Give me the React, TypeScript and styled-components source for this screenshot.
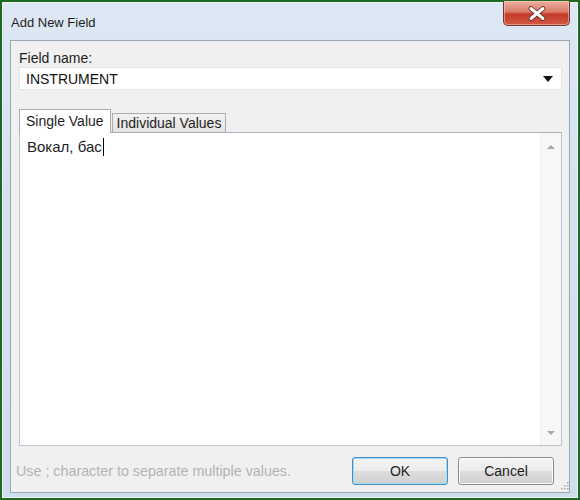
import React from "react";
import styled, { createGlobalStyle } from "styled-components";

const GlobalStyle = createGlobalStyle`
  html, body { margin: 0; padding: 0; background: #ffffff; }
  body { font-family: "Liberation Sans", Arial, sans-serif; }
  * { box-sizing: border-box; }
`;

const Window = styled.div`
  width: 580px;
  height: 500px;
  border: 2px solid #1f6a22;
  background: linear-gradient(180deg, #dde8f4 0%, #d4e2f0 40%, #cfdeed 100%);
  display: flex;
  flex-direction: column;
  box-shadow: inset 0 0 0 1px #eef4fa;
`;

const TitleBar = styled.div`
  height: 38px;
  display: flex;
  align-items: flex-start;
  justify-content: space-between;
  padding-left: 9px;
  padding-right: 8px;
`;

const Title = styled.div`
  font-family: "Liberation Sans", Arial, sans-serif;
  font-size: 13px;
  color: #1e1e1e;
  padding-top: 13px;
`;

const CloseButton = styled.div`
  width: 67px;
  height: 25px;
  margin-top: -1px;
  border: 1px solid #6e3a33;
  border-top: none;
  border-radius: 0 0 5px 5px;
  background: linear-gradient(180deg, #eab0a3 0%, #dc7c68 45%, #c4392a 55%, #d35a44 100%);
  display: flex;
  align-items: center;
  justify-content: center;
  box-shadow: inset 0 0 0 1px rgba(255, 210, 200, 0.5);
`;

const Client = styled.div`
  flex: 1;
  margin: 0 8px 5px 8px;
  border: 1px solid #9aa6b3;
  background: #f0f0f0;
  display: flex;
  flex-direction: column;
  padding: 9px 7px 7px 8px;
  position: relative;
`;

const Label = styled.div`
  font-size: 14px;
  color: #1e1e1e;
  line-height: 17px;
`;

const Combo = styled.div`
  height: 23px;
  background: #ffffff;
  border: 1px solid #e6e6e6;
  display: flex;
  align-items: center;
  justify-content: space-between;
  padding: 0 8px 0 6px;
  font-size: 14px;
  color: #111;
`;

const Arrow = styled.span`
  width: 0;
  height: 0;
  border-left: 5px solid transparent;
  border-right: 5px solid transparent;
  border-top: 6px solid #111;
  margin-top: 1px;
`;

const Tabs = styled.div`
  display: flex;
  align-items: flex-end;
  margin-top: 19px;
  height: 24px;
`;

const Tab = styled.div<{ $active?: boolean }>`
  font-size: 14px;
  color: #1e1e1e;
  height: ${(p) => (p.$active ? "24px" : "20px")};
  padding: ${(p) => (p.$active ? "3px 6px 0 6px" : "1px 4px 0 4px")};
  background: ${(p) =>
    p.$active ? "#ffffff" : "linear-gradient(180deg, #f2f2f2 0%, #e3e3e3 100%)"};
  border: 1px solid #a9aeb5;
  border-bottom: ${(p) => (p.$active ? "none" : "1px solid #a9aeb5")};
  margin-left: ${(p) => (p.$active ? "0" : "1px")};
  position: relative;
  z-index: ${(p) => (p.$active ? 2 : 1)};
`;

const Editor = styled.div`
  flex: 1;
  background: #ffffff;
  border: 1px solid #b9c4d1;
  border-top-color: #a6b1bd;
  display: flex;
  margin-top: -1px;
`;

const EditorText = styled.div`
  flex: 1;
  padding: 5px 7px;
  font-size: 15px;
  color: #1e1e1e;
`;

const Caret = styled.span`
  display: inline-block;
  width: 1px;
  height: 18px;
  background: #000;
  vertical-align: -4px;
  margin-left: 1px;
`;

const ScrollBar = styled.div`
  width: 21px;
  background: #f7f7f7;
  border-left: 1px solid #f0f0f0;
  display: flex;
  flex-direction: column;
  justify-content: space-between;
  align-items: center;
  padding: 12px 0 10px 0;
`;

const ScrollArrow = styled.span<{ $up?: boolean }>`
  width: 0;
  height: 0;
  border-left: 4px solid transparent;
  border-right: 4px solid transparent;
  ${(p) =>
    p.$up ? "border-bottom: 4px solid #a8a8a8;" : "border-top: 4px solid #a8a8a8;"}
`;

const Footer = styled.div`
  display: flex;
  align-items: center;
  height: 39px;
  padding-top: 11px;
  padding-right: 8px;
  margin-left: -3px;
`;

const Hint = styled.div`
  flex: 1;
  font-size: 14.3px;
  color: #b3b3b3;
`;

const Button = styled.div<{ $focused?: boolean }>`
  width: 96px;
  height: 28px;
  border-radius: 3px;
  border: 1px solid ${(p) => (p.$focused ? "#3d8fc6" : "#8a8a8a")};
  box-shadow: inset 0 0 0 1px ${(p) => (p.$focused ? "#a6dcf4" : "#fcfcfc")};
  background: linear-gradient(180deg, #f4f4f4 0%, #ececec 48%, #dddddd 52%, #d0d0d0 100%);
  display: flex;
  align-items: center;
  justify-content: center;
  font-size: 14px;
  color: #1e1e1e;
  margin-left: 10px;
`;

const Grip = styled.svg`
  position: absolute;
  right: 0px;
  bottom: 2px;
`;

export default function App() {
  return (
    <>
      <GlobalStyle />
      <Window>
        <TitleBar>
          <Title>Add New Field</Title>
          <CloseButton>
            <svg width="20" height="15" viewBox="0 0 20 15">
              <path
                d="M4 2.5 L16 12.5 M16 2.5 L4 12.5"
                stroke="#5a2a24"
                strokeWidth="4.6"
                strokeLinecap="round"
              />
              <path
                d="M4 2.5 L16 12.5 M16 2.5 L4 12.5"
                stroke="#ffffff"
                strokeWidth="3"
                strokeLinecap="round"
              />
            </svg>
          </CloseButton>
        </TitleBar>
        <Client>
          <Label>Field name:</Label>
          <Combo>
            <span>INSTRUMENT</span>
            <Arrow />
          </Combo>
          <Tabs>
            <Tab $active>Single Value</Tab>
            <Tab>Individual Values</Tab>
          </Tabs>
          <Editor>
            <EditorText>
              Вокал, бас
              <Caret />
            </EditorText>
            <ScrollBar>
              <ScrollArrow $up />
              <ScrollArrow />
            </ScrollBar>
          </Editor>
          <Footer>
            <Hint>Use ; character to separate multiple values.</Hint>
            <Button $focused>OK</Button>
            <Button>Cancel</Button>
          </Footer>
          <Grip width="10" height="10" viewBox="0 0 10 10">
            {[
              [8, 2],
              [5, 5],
              [8, 5],
              [2, 8],
              [5, 8],
              [8, 8],
            ].map(([x, y], i) => (
              <rect key={i} x={x} y={y} width="1.5" height="1.5" fill="#a0a8b2" />
            ))}
          </Grip>
        </Client>
      </Window>
    </>
  );
}
